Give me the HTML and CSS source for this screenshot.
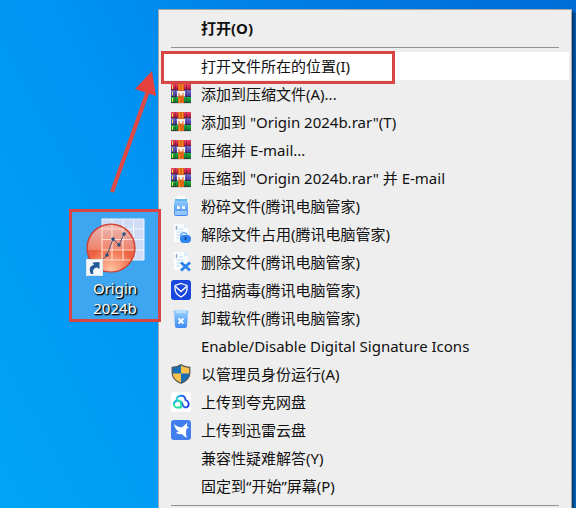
FILE: index.html
```html
<!DOCTYPE html>
<html lang="zh-CN">
<head>
    <meta charset="UTF-8">
    <meta name="viewport" content="width=device-width, initial-scale=1.0">
    <title>Origin 2024b</title>
    <link rel="stylesheet" href="styles.css">
</head>
<body>
    <!-- 共用图标 -->
    <svg class="defs" width="0" height="0">
        <defs>
            <linearGradient id="red" x1="0" y1="0" x2="0" y2="1">
                <stop offset="0" stop-color="#ee4565"/>
                <stop offset="1" stop-color="#a80f38"/>
            </linearGradient>
            <linearGradient id="purple" x1="0" y1="0" x2="0" y2="1">
                <stop offset="0" stop-color="#7a70d4"/>
                <stop offset="1" stop-color="#37329a"/>
            </linearGradient>
            <linearGradient id="green" x1="0" y1="0" x2="0" y2="1">
                <stop offset="0" stop-color="#20b04c"/>
                <stop offset="1" stop-color="#077527"/>
            </linearGradient>
            <linearGradient id="blue" x1="0" y1="0" x2="0" y2="1">
                <stop offset="0" stop-color="#8cc9ff"/>
                <stop offset="1" stop-color="#3c87f4"/>
            </linearGradient>
            <linearGradient id="cloud" x1="0" y1="0" x2="1" y2="0">
                <stop offset="0" stop-color="#20d6dc"/>
                <stop offset="0.4" stop-color="#2278f5"/>
                <stop offset="1" stop-color="#2438ef"/>
            </linearGradient>
            <symbol id="rar" viewBox="0 0 20 20">
                <rect x="0" y="0" width="20" height="6" fill="url(#red)"/>
                <rect x="0" y="6" width="20" height="7" fill="url(#purple)"/>
                <rect x="0" y="13" width="20" height="6" fill="url(#green)"/>
                <path d="M0 5.8h20M0 12.5h20M0 18.7h20" stroke="#38283a" stroke-width="0.7"/>
                <path d="M1.5 1v4M1.5 7.5v4M1.5 14v4" stroke="#f5d84c" stroke-width="1"/>
                <path d="M4.5 0v19M15.5 0v19" stroke="#3a2030" stroke-opacity="0.35"/>
                <rect x="7" y="0" width="6" height="19" fill="#df6512"/>
                <path d="M8.5 0v6M11.5 0v6M8.5 14v5" stroke="#f59a35" stroke-width="0.8"/>
                <path d="M6 12.5V7h8v5.5h-1.5V9h-1v2.500h-3V9h-1v3.500z" fill="#f8f1ee"/>
            </symbol>
            <symbol id="doc" viewBox="0 0 20 20">
                <path d="M3 0h10l4 4v14H3z" fill="#fafdff"/>
                <path d="M13 0v4h4z" fill="#dce9f6"/>
                <path d="M5.500 2v4" stroke="#8ea9c9" stroke-width="1.500"/>
                <path d="M8 5h4M5.500 8h7M5.500 11h4M5.500 14h3" stroke="#b9d5ee"/>
            </symbol>
        </defs>
    </svg>

    <main class="desktop">
        <a class="shortcut" href="#">
            <svg class="shortcut-icon" viewBox="0 0 60 58">
                <defs>
                    <radialGradient id="ball" cx="0.5" cy="0.95" r="0.8">
                        <stop offset="0" stop-color="#ffc4a2"/>
                        <stop offset="0.6" stop-color="#ee6442"/>
                        <stop offset="1" stop-color="#dd5a48"/>
                    </radialGradient>
                    <linearGradient id="shine" x1="0" y1="0" x2="0" y2="1">
                        <stop offset="0" stop-color="#fff" stop-opacity="0.6"/>
                        <stop offset="1" stop-color="#fff" stop-opacity="0.2"/>
                    </linearGradient>
                    <clipPath id="round"><circle cx="26" cy="30" r="23"/></clipPath>
                </defs>
                <rect x="17" y="1" width="42" height="41" fill="#cfdcf5"/>
                <path d="M17 1h42v41H17zM27 1v41M38 1v41M48.500 1v41M17 11h42M17 21.500h42M17 32h42" fill="none" stroke="#f1f5ff"/>
                <circle cx="26" cy="30" r="24" fill="url(#ball)" stroke="#cf3d32" stroke-width="1.200"/>
                <path clip-path="url(#round)" d="M2 6h48v26H2z" fill="url(#shine)"/>
                <path clip-path="url(#round)" d="M17 1v41M27 1v41M38 1v41M17 11h43M17 21.500h43M17 32h43M17 42h43" fill="none" stroke="#ffd9cc" stroke-width="1.200"/>
                <path d="M17 42L22 37L28 21L34 27L39 16" fill="none" stroke="#4b5580" stroke-width="1"/>
                <g fill="#244f7c">
                    <circle cx="22" cy="37" r="1.800"/>
                    <circle cx="28" cy="21" r="1.800"/>
                    <circle cx="34" cy="27" r="1.800"/>
                    <circle cx="39" cy="16" r="1.800"/>
                </g>
                <rect x="1.500" y="41.500" width="16" height="16" fill="#f5f7f8" stroke="#dde4e8"/>
                <path d="M6 56C3.500 51 5 47.500 9 47L7.500 44.500L14.500 44L14.500 51L12 49.500C8.500 50 7.500 52 8.500 56z" fill="#235a9c"/>
            </svg>
            <span>Origin<br>2024b</span>
        </a>

        <menu class="menu">
            <li><button class="item default"><span class="icon"></span>打开(O)</button></li>
            <li class="line"></li>
            <li><button class="item active"><span class="icon"></span>打开文件所在的位置(I)</button></li>
            <li><button class="item"><svg class="icon"><use href="#rar"/></svg>添加到压缩文件(A)...</button></li>
            <li><button class="item"><svg class="icon"><use href="#rar"/></svg>添加到 "Origin 2024b.rar"(T)</button></li>
            <li><button class="item"><svg class="icon"><use href="#rar"/></svg>压缩并 E-mail...</button></li>
            <li><button class="item"><svg class="icon"><use href="#rar"/></svg>压缩到 "Origin 2024b.rar" 并 E-mail</button></li>
            <li>
                <button class="item">
                    <svg class="icon" viewBox="0 0 20 20">
                        <rect x="6" y="0" width="8" height="3" fill="#fff"/>
                        <path d="M4 3h12v3H4z" fill="#60b9f2"/>
                        <rect x="3" y="5" width="14" height="15" rx="2" fill="url(#blue)"/>
                        <path d="M4 15h12v4H4z" fill="#b5ddff" fill-opacity="0.7"/>
                        <path d="M6 13V9l2 2 1-2v4zM11 13V9l2 2 1-2v4z" fill="#fff"/>
                    </svg>粉碎文件(腾讯电脑管家)
                </button>
            </li>
            <li>
                <button class="item">
                    <svg class="icon" viewBox="0 0 20 20">
                        <use href="#doc"/>
                        <path d="M10 13a3 3 0 0 1 6-2" fill="none" stroke="#64adf8" stroke-width="1.5"/>
                        <rect x="9" y="11" width="11" height="8" rx="4" fill="#2e84ed"/>
                        <path d="M14.500 13v3" stroke="#12418d" stroke-width="1.500"/>
                    </svg>解除文件占用(腾讯电脑管家)
                </button>
            </li>
            <li>
                <button class="item">
                    <svg class="icon" viewBox="0 0 20 20">
                        <use href="#doc"/>
                        <path d="M10 10.500l9 8M19 10.500l-9 8" stroke="#2d82e9" stroke-width="3"/>
                    </svg>删除文件(腾讯电脑管家)
                </button>
            </li>
            <li>
                <button class="item">
                    <svg class="icon" viewBox="0 0 20 20">
                        <rect width="20" height="20" rx="3" fill="#1747dc"/>
                        <path d="M10 3.500L16 5.500V9c0 4-2.500 6-6 8-3.500-2-6-4-6-8V5.500z" fill="none" stroke="#fff" stroke-width="1.300"/>
                        <path d="M4.500 6.500L10 11.500L15.500 6.500" fill="none" stroke="#fff" stroke-width="1.500"/>
                    </svg>扫描病毒(腾讯电脑管家)
                </button>
            </li>
            <li>
                <button class="item">
                    <svg class="icon" viewBox="0 0 20 20">
                        <path d="M3 5h14l-1 13a2 2 0 0 1-2 2H6a2 2 0 0 1-2-2z" fill="url(#blue)"/>
                        <path d="M5 3l4-2 6 2z" fill="#d7edff"/>
                        <rect x="2.500" y="2.500" width="15" height="3" rx="1" fill="#8fcbfb"/>
                        <path d="M5 4h10" stroke="#e4f4ff"/>
                        <path d="M7.500 10.500l5 5M12.500 10.500l-5 5" stroke="#fff" stroke-width="1.800"/>
                    </svg>卸载软件(腾讯电脑管家)
                </button>
            </li>
            <li><button class="item"><span class="icon"></span>Enable/Disable Digital Signature Icons</button></li>
            <li>
                <button class="item">
                    <svg class="icon" viewBox="0 0 20 20">
                        <path d="M10 0.500C7.500 2.500 4.500 3.200 1.200 3.200V9c0 5 4 8.500 8.800 10.700C14.800 17.500 18.800 14 18.800 9V3.200C15.500 3.200 12.500 2.500 10 0.500z" fill="#fbc34b"/>
                        <path d="M10 0.500C7.500 2.500 4.500 3.200 1.200 3.200V9.500H10zM10 9.500h8.800C18.500 14 14.800 17.500 10 19.700z" fill="#176eb5"/>
                        <path d="M10 0.800C7.500 2.700 4.500 3.400 1.200 3.400V9c0 5 4 8.300 8.800 10.300C14.800 17.300 18.800 14 18.800 9V3.400C15.500 3.400 12.500 2.700 10 0.800z" fill="none" stroke="#4c5354" stroke-width="1.200"/>
                    </svg>以管理员身份运行(A)
                </button>
            </li>
            <li>
                <button class="item">
                    <svg class="icon" viewBox="0 0 20 20">
                        <rect width="20" height="20" rx="3" fill="#fff"/>
                        <path d="M5.500 8.500C5.500 2.500 14 2 14.500 8C19 9.500 18.500 15.500 14.500 15.500C11 15.500 12.500 12 10 9.500" fill="none" stroke="url(#cloud)" stroke-width="1.800"/>
                        <path d="M6.500 8.500C2 9 1.500 15.500 6 15.500H10V12C10 10 8.500 8.500 6.500 8.500z" fill="none" stroke="#27dd9c" stroke-width="1.800"/>
                        <path d="M3 12C3 10 4.500 9 6.500 8.500" fill="none" stroke="#20b9ee" stroke-width="1.800"/>
                    </svg>上传到夸克网盘
                </button>
            </li>
            <li>
                <button class="item">
                    <svg class="icon" viewBox="0 0 20 20">
                        <rect width="20" height="20" rx="3" fill="#427fee"/>
                        <path d="M3 4C6 7 9 7 11 7.500L16.500 2.500C15.500 5 15.500 6.500 18 8L15.500 8.500C15 12 14.500 15 16 17.500C13.500 17 12 15 11 14C8.500 14.500 6 14 5 12.500L8 12C5.500 10.500 3.500 7.500 3 4z" fill="#fff"/>
                    </svg>上传到迅雷云盘
                </button>
            </li>
            <li><button class="item"><span class="icon"></span>兼容性疑难解答(Y)</button></li>
            <li><button class="item"><span class="icon"></span>固定到“开始”屏幕(P)</button></li>
            <li class="line"></li>
        </menu>

        <!-- 标注 -->
        <div class="mark"></div>
        <svg class="arrow" viewBox="0 0 50 124">
            <path d="M3 121L39 20" stroke="#df4a46" stroke-width="4"/>
            <path d="M43 0L47 25L26 18z" fill="#e5423e"/>
        </svg>
    </main>
</body>
</html>
```

FILE: styles.css
```css
body {
    margin: 0;
    font-family: "Noto Sans", "Noto Sans CJK SC", sans-serif;
    font-size: 15px;
    color: #111;
}
.defs {
    position: absolute;
}
.desktop {
    position: relative;
    display: flex;
    height: 100vh;
    box-sizing: border-box;
    padding: 9px 4px 0 158px;
    overflow: hidden;
    background: linear-gradient(62deg, #00a4f6 0%, #0094f4 38%, #007ce6 68%, #006cd8 100%);
}
.menu {
    flex: 1;
    height: max-content;
    margin: 0;
    padding: 4px 2px;
    list-style: none;
    background-color: #eee;
    border: 1px solid #a3a7aa;
    box-shadow: 3px 3px 3px rgba(0, 0, 0, 0.5);
}
.item {
    display: flex;
    align-items: center;
    gap: 10px;
    width: 100%;
    height: 28px;
    padding: 0 10px;
    border: none;
    background: none;
    color: inherit;
    font: inherit;
    line-height: 28px;
    white-space: nowrap;
}
.item.default {
    font-weight: bold;
}
.item.active {
    background-color: #fff;
}
.icon {
    flex: none;
    width: 20px;
    height: 20px;
}
.line {
    height: 1px;
    margin: 5px 10px 4px;
    background-color: #919191;
}
/* 桌面图标 */
.shortcut {
    position: absolute;
    left: 69px;
    top: 209px;
    z-index: 1;
    display: flex;
    flex-direction: column;
    align-items: center;
    gap: 2px;
    width: 92px;
    height: 113px;
    box-sizing: border-box;
    padding-top: 6px;
    border: 3px solid #d84545;
    background-color: #3ea6f0;
    color: #fff;
    line-height: 20px;
    text-align: center;
    text-decoration: none;
    text-shadow: 1px 1px 2px #000, 1px 1px 1px #000;
}
.shortcut-icon {
    width: 60px;
    height: 58px;
}
.mark {
    position: absolute;
    left: 161px;
    top: 51px;
    width: 234px;
    height: 33px;
    box-sizing: border-box;
    border: 3px solid #d84545;
}
.arrow {
    position: absolute;
    left: 109px;
    top: 71px;
    width: 50px;
    height: 124px;
}
```
